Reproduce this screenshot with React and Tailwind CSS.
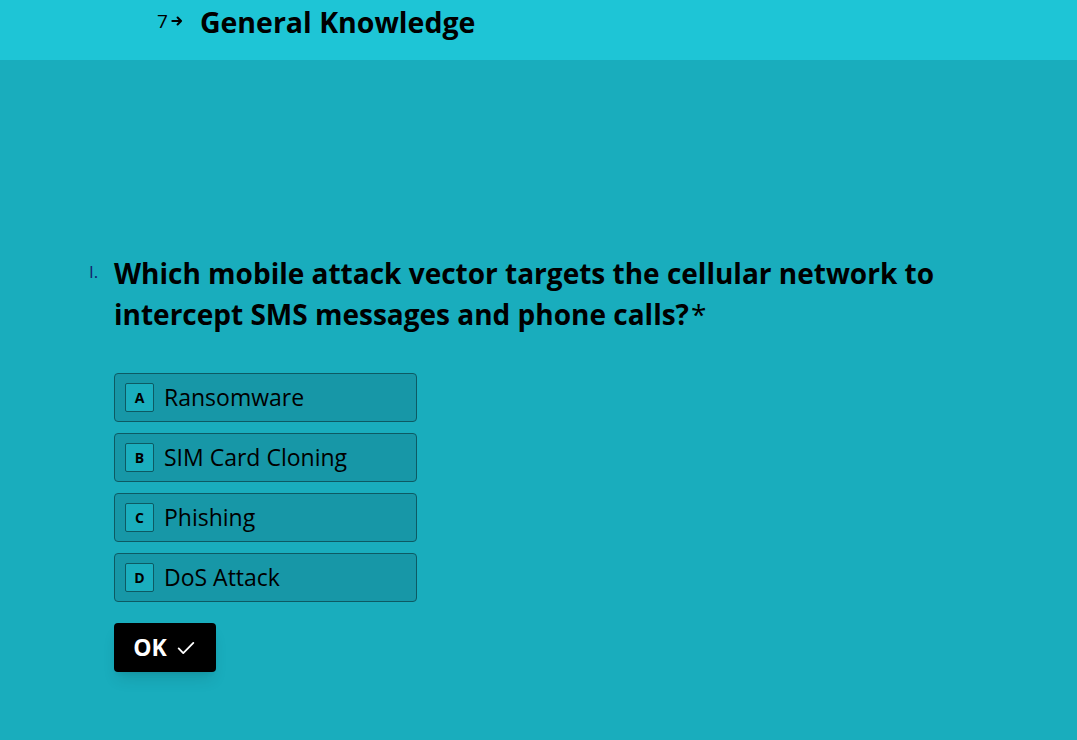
import React, { useState } from 'react';

const options = [
  { key: 'A', label: 'Ransomware' },
  { key: 'B', label: 'SIM Card Cloning' },
  { key: 'C', label: 'Phishing' },
  { key: 'D', label: 'DoS Attack' },
];

const App = () => {
  const [selected, setSelected] = useState(null);

  return (
    <div className="min-h-[740px] w-full bg-[#19adbd] font-['Open_Sans',sans-serif] text-black">
      {/* Header */}
      <div className="h-[60px] bg-[#1ec5d6] flex items-start pt-[4px] pl-[157px]">
        <span className="text-[19px] leading-[34px] flex items-center">
          7
          <svg className="w-[14px] h-[14px] ml-[2px]" viewBox="0 0 24 24" fill="none" stroke="currentColor" strokeWidth="3.5" strokeLinecap="round" strokeLinejoin="round">
            <path d="M4 12h15M13 6l6 6-6 6" />
          </svg>
        </span>
        <h1 className="ml-[16px] text-[28.5px] font-bold leading-[36px]">General Knowledge</h1>
      </div>

      {/* Question */}
      <div className="pt-[193px] pl-[89px] flex">
        <span className="w-[25px] pt-[10px] text-[17px] text-[#14206a] leading-none">I.</span>
        <div>
          <h2 className="text-[28px] font-bold leading-[41px] max-w-[880px]">
            Which mobile attack vector targets the cellular network to intercept SMS messages and phone calls?
            <span className="inline-block ml-[2px] font-normal">*</span>
          </h2>

          <div className="mt-[38px] flex flex-col gap-[11px] w-[303px]">
            {options.map((o) => (
              <button
                key={o.key}
                onClick={() => setSelected(o.key)}
                className={`h-[49px] flex items-center px-[10px] rounded-[4px] border border-[#0d5a63] text-left ${
                  selected === o.key ? 'bg-[#14808e]' : 'bg-[#1797a7]'
                }`}
              >
                <span className="w-[29px] h-[29px] flex items-center justify-center border border-[#0d5a63] bg-[#1aaebe] rounded-[2px] text-[14px] font-bold">
                  {o.key}
                </span>
                <span className="ml-[10px] text-[23px] font-normal">{o.label}</span>
              </button>
            ))}
          </div>

          <button className="mt-[21px] h-[49px] w-[102px] bg-black text-white rounded-[4px] flex items-center justify-center gap-[8px] shadow-lg">
            <span className="text-[23px] font-bold">OK</span>
            <svg className="w-[22px] h-[22px]" viewBox="0 0 24 24" fill="none" stroke="currentColor" strokeWidth="2" strokeLinecap="round" strokeLinejoin="round">
              <path d="M4 12.5l5 5L20 6.5" />
            </svg>
          </button>
        </div>
      </div>
    </div>
  );
};

export default App;
